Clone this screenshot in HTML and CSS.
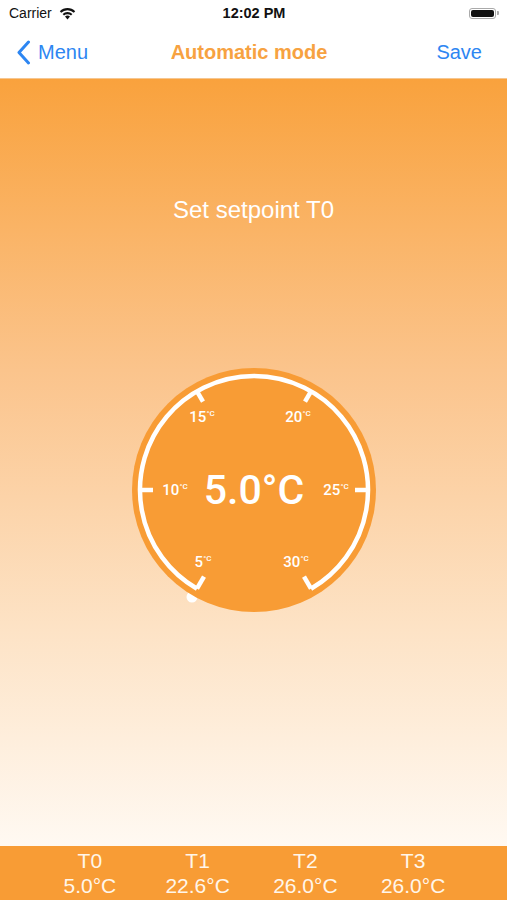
FILE: index.html
```html
<!DOCTYPE html>
<html lang="en">
<head>
    <meta charset="UTF-8">
    <meta name="viewport" content="width=device-width, initial-scale=1.0">
    <title>Automatic mode</title>
    <link rel="stylesheet" href="styles.css">
</head>
<body>

    <div class="status-bar">
        <div class="carrier">
            Carrier
            <svg class="wifi" width="17" height="13" viewBox="0 0 17 13">
                <path d="M8.5 12.5 L6 9.6 A3.6 3.6 0 0 1 11 9.6 Z" fill="#111"/>
                <path d="M3.6 7 A7 7 0 0 1 13.4 7 L12 8.6 A5 5 0 0 0 5 8.6 Z" fill="#111"/>
                <path d="M0.8 4.2 A11 11 0 0 1 16.2 4.2 L14.8 5.8 A9 9 0 0 0 2.2 5.8 Z" fill="#111"/>
            </svg>
        </div>
        <div class="time">12:02 PM</div>
        <div class="battery">
            <span class="battery-body"><span class="battery-fill"></span></span>
            <span class="battery-cap"></span>
        </div>
    </div>

    <nav class="nav-bar">
        <a class="nav-back">
            <svg width="15" height="25" viewBox="0 0 15 25">
                <path d="M12.5 2 L3 12.5 L12.5 23" fill="none" stroke="#2d86f2" stroke-width="3" stroke-linecap="round" stroke-linejoin="round"/>
            </svg>
            Menu
        </a>
        <h1 class="nav-title">Automatic mode</h1>
        <a class="nav-save">Save</a>
    </nav>

    <main class="setpoint">
        <p class="setpoint-title">Set setpoint T0</p>

        <svg class="dial" width="250" height="250" viewBox="0 0 250 250">
            <!-- knob sits under the disc -->
            <circle cx="63" cy="232" r="5.5" fill="#ffffff"/>
            <circle cx="125" cy="125" r="122" fill="#f89c35"/>
            <path d="M68 223.7 A114 114 0 1 1 182 223.7" fill="none" stroke="#ffffff" stroke-width="4.5"/>
            <g stroke="#ffffff" stroke-width="4.5">
                <line x1="68" y1="223.7" x2="75" y2="211.6"/>
                <line x1="11" y1="125" x2="24" y2="125"/>
                <line x1="68" y1="26.3" x2="74" y2="36.7"/>
                <line x1="182" y1="26.3" x2="176" y2="36.7"/>
                <line x1="239" y1="125" x2="226" y2="125"/>
                <line x1="182" y1="223.7" x2="175" y2="211.6"/>
            </g>
            <g class="dial-labels" fill="#ffffff" text-anchor="middle">
                <text x="73" y="57">15<tspan class="unit" dy="-6">°C</tspan></text>
                <text x="169" y="57">20<tspan class="unit" dy="-6">°C</tspan></text>
                <text x="46" y="130">10<tspan class="unit" dy="-6">°C</tspan></text>
                <text x="207" y="130">25<tspan class="unit" dy="-6">°C</tspan></text>
                <text x="74" y="202">5<tspan class="unit" dy="-6">°C</tspan></text>
                <text x="167" y="202">30<tspan class="unit" dy="-6">°C</tspan></text>
            </g>
            <text class="dial-value" x="125" y="139" fill="#ffffff" text-anchor="middle">5.0°C</text>
        </svg>
    </main>

    <footer class="setpoints">
        <div class="setpoint-item"><span>T0</span><span>5.0°C</span></div>
        <div class="setpoint-item"><span>T1</span><span>22.6°C</span></div>
        <div class="setpoint-item"><span>T2</span><span>26.0°C</span></div>
        <div class="setpoint-item"><span>T3</span><span>26.0°C</span></div>
    </footer>

</body>
</html>
```

FILE: styles.css
```css
body {
    font-family: 'Liberation Sans', Arial, sans-serif;
    margin: 0;
    padding: 0;
    width: 507px;
    height: 900px;
    overflow: hidden;
    display: flex;
    flex-direction: column;
    background: #ffffff;
}
.status-bar {
    height: 26px;
    display: flex;
    align-items: center;
    justify-content: space-between;
    padding: 0 8px 0 9px;
    color: #111;
    font-size: 14px;
}
.carrier {
    display: flex;
    align-items: center;
    gap: 7px;
    width: 100px;
}
.time {
    font-weight: bold;
    font-size: 14.5px;
}
.battery {
    width: 100px;
    display: flex;
    justify-content: flex-end;
    align-items: center;
}
.battery-body {
    width: 27px;
    height: 11px;
    border: 1px solid #aaa;
    border-radius: 3px;
    padding: 1px;
    box-sizing: border-box;
    display: flex;
}
.battery-fill {
    flex: 1;
    background: #111;
    border-radius: 2px;
}
.battery-cap {
    width: 2px;
    height: 4px;
    background: #aaa;
    border-radius: 0 1px 1px 0;
    margin-left: 1px;
}
.nav-bar {
    height: 53px;
    display: flex;
    align-items: center;
    justify-content: space-between;
    padding: 0 25px 0 16px;
    border-bottom: 1px solid #f6c690;
    box-sizing: border-box;
    font-size: 20px;
}
.nav-back, .nav-save {
    color: #2d86f2;
    display: flex;
    align-items: center;
    gap: 7px;
    width: 100px;
}
.nav-save {
    justify-content: flex-end;
}
.nav-title {
    margin: 0;
    font-size: 20px;
    font-weight: bold;
    color: #f7a241;
}
.setpoint {
    flex: 1;
    display: flex;
    flex-direction: column;
    align-items: center;
    background: linear-gradient(180deg, #f9a23d 0%, #fbc48c 38%, #fde3c6 72%, #fff9f2 100%);
}
.setpoint-title {
    margin: 117px 0 0;
    font-size: 24px;
    line-height: 28px;
    color: #ffffff;
}
.dial {
    margin-top: 141px;
    overflow: visible;
}
.dial-labels {
    font-family: Roboto, sans-serif;
    font-weight: 500;
    font-size: 15px;
}
.dial-labels .unit {
    font-size: 8px;
}
.dial-value {
    font-family: Roboto, sans-serif;
    font-weight: 500;
    font-size: 41px;
}
.setpoints {
    height: 54px;
    background: #f89c35;
    display: grid;
    grid-template-columns: repeat(4, 1fr);
    padding: 2px 40px 0 36px;
    box-sizing: border-box;
}
.setpoint-item {
    display: flex;
    flex-direction: column;
    align-items: center;
    color: #fff6ea;
    font-size: 21px;
    line-height: 25px;
}
```
